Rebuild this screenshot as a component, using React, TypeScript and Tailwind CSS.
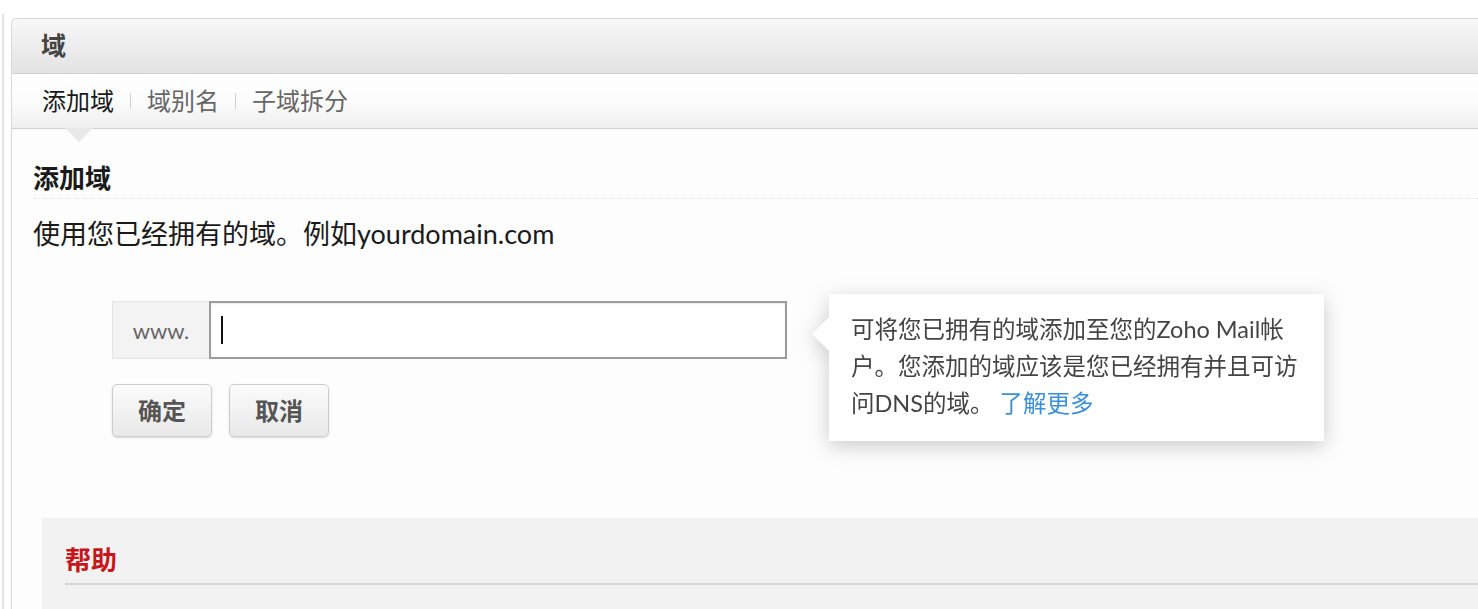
const font = "font-['Lato','Noto_Sans_CJK_SC',sans-serif]";

const tabs = ["添加域", "域别名", "子域拆分"];

export default function App() {
  return (
    <div className={`${font} flex h-[609px] w-[1478px] overflow-hidden bg-white`}>
      {/* left rail */}
      <div className="ml-[2px] mt-[14px] w-[2px] shrink-0 rounded-t bg-[#e2e2e2]" />

      <div className="relative ml-[7px] mt-[18px] flex min-w-0 flex-1 flex-col rounded-tl-[6px] border-l border-t border-[#d8d8d8] bg-[#fdfdfd]">
        {/* header */}
        <div className="flex h-[55px] shrink-0 items-center rounded-tl-[6px] border-b border-[#d0d0d0] bg-gradient-to-b from-[#f8f8f8] to-[#e3e3e3] pl-[29px]">
          <span className="text-[25px] font-bold text-[#444]">域</span>
        </div>

        {/* tabs */}
        <div className="relative flex h-[55px] shrink-0 items-center border-b border-[#d2d2d2] bg-gradient-to-b from-white via-[#fcfcfc] to-[#efefef] pl-[30px]">
          {tabs.map((t, i) => (
            <div key={t} className="flex items-center">
              {i > 0 && <span className="mx-[16px] h-[16px] w-px bg-[#cfcfcf]" />}
              <span className={`text-[24px] ${i === 0 ? "text-[#1a1a1a]" : "text-[#666]"}`}>{t}</span>
            </div>
          ))}
          <div className="absolute left-[53px] top-[54px] h-0 w-0 border-l-[14px] border-r-[14px] border-t-[14px] border-l-transparent border-r-transparent border-t-[#e9e9e9]" />
        </div>

        {/* content */}
        <div className="flex shrink-0 flex-col pl-[21px]">
          <div className="mt-[31px] border-b border-dotted border-[#e2e2e2] pb-[2px]">
            <h2 className="text-[26px] font-bold leading-[36px] text-[#1a1a1a]">添加域</h2>
          </div>
          <p className="mt-[17px] text-[27px] leading-[36px] text-[#1a1a1a]">使用您已经拥有的域。例如yourdomain.com</p>

          <div className="relative ml-[79px] mt-[49px]">
            <div className="flex h-[58px] w-[675px]">
              <div className="flex w-[97px] items-center justify-center border border-r-0 border-[#e4e4e4] bg-[#f3f3f3] text-[22px] text-[#666]">
                www.
              </div>
              <div className="flex flex-1 items-center border-2 border-[#9c9c9c] bg-white pl-[10px] shadow-[inset_0_1px_2px_rgba(0,0,0,0.08)]">
                <span className="h-[28px] w-[2px] bg-[#111]" />
              </div>
            </div>

            <div className="mt-[25px] flex gap-[17px]">
              {["确定", "取消"].map((b) => (
                <button
                  key={b}
                  className="flex h-[53px] w-[100px] items-center justify-center rounded-[5px] border border-[#cdcdcd] bg-gradient-to-b from-[#fbfbfb] to-[#e9e9e9] text-[24px] font-bold text-[#555] shadow-[0_1px_2px_rgba(0,0,0,0.15)]"
                >
                  {b}
                </button>
              ))}
            </div>

            {/* tooltip */}
            <div className="absolute left-[717px] top-[-7px] drop-shadow-[0_5px_10px_rgba(0,0,0,0.2)]">
              <div className="absolute left-[-17px] top-[23px] h-0 w-0 border-b-[17px] border-r-[17px] border-t-[17px] border-b-transparent border-r-white border-t-transparent" />
              <div className="h-[147px] w-[495px] whitespace-nowrap bg-white pl-[22px] pt-[17px] text-[23.5px] leading-[37px] text-[#444]">
                可将您已拥有的域添加至您的Zoho Mail帐
                <br />
                户。您添加的域应该是您已经拥有并且可访
                <br />
                问DNS的域。 <span className="text-[#3d8fd4]">了解更多</span>
              </div>
            </div>
          </div>

          {/* help */}
          <div className="ml-[9px] mt-[81px] h-[120px] bg-[#f2f2f2] pl-[23px] pt-[23px]">
            <h3 className="text-[26px] font-bold leading-[38px] text-[#c8161d]">帮助</h3>
            <div className="mt-[4px] h-[2px] bg-[#d6d6d6]" />
          </div>
        </div>
      </div>
    </div>
  );
}
